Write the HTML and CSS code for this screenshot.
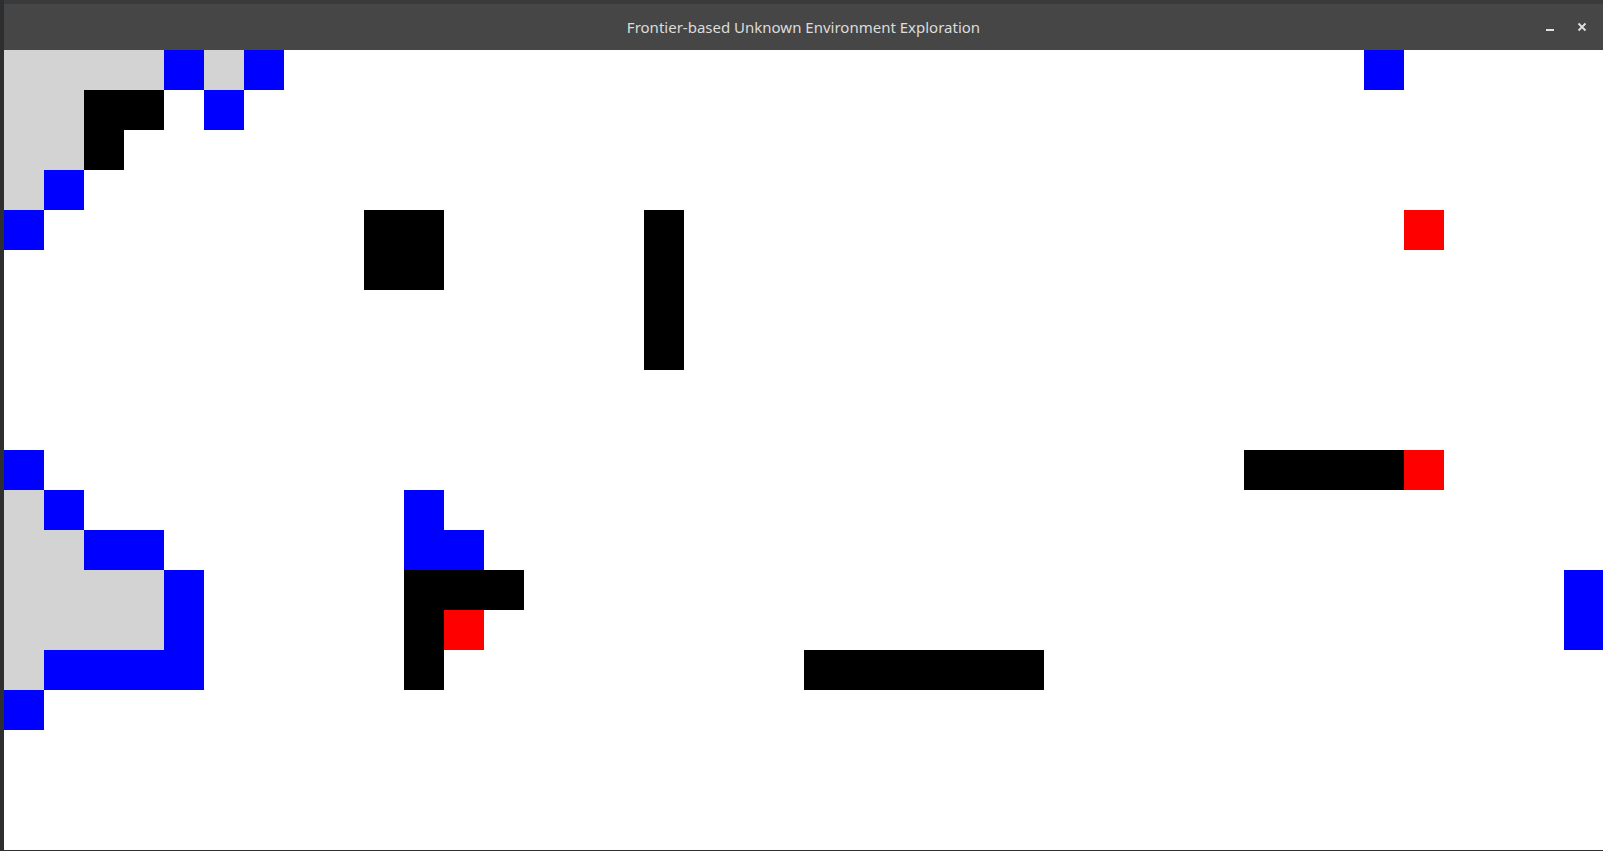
FILE: index.html
```html
<!DOCTYPE html>
<html>
<head>
<meta charset="utf-8">
<title>Frontier-based Unknown Environment Exploration</title>
<link rel="stylesheet" href="styles.css">
</head>
<body>
<div class="desktop">
  <div class="side-strip"></div>
  <div class="window">
    <div class="titlebar">
      <div class="title">Frontier-based Unknown Environment Exploration</div>
      <div class="controls">
        <span class="btn min"><svg width="10" height="10" viewBox="0 0 10 10"><rect x="1" y="7" width="8" height="2" fill="#e0e0e0"/></svg></span>
        <span class="btn close"><svg width="10" height="10" viewBox="0 0 10 10"><path d="M1.5 1.5 L8.5 8.5 M8.5 1.5 L1.5 8.5" stroke="#e0e0e0" stroke-width="1.8"/></svg></span>
      </div>
    </div>
    <div class="canvas-wrap">
      <div class="map">
        <!-- row 0 -->
        <div class="c known" style="grid-area:1/1/2/5"></div>
        <div class="c frontier" style="grid-area:1/5/2/6"></div>
        <div class="c known" style="grid-area:1/6/2/7"></div>
        <div class="c frontier" style="grid-area:1/7/2/8"></div>
        <div class="c frontier" style="grid-area:1/35/2/36"></div>
        <!-- row 1 -->
        <div class="c known" style="grid-area:2/1/3/3"></div>
        <div class="c wall" style="grid-area:2/3/3/5"></div>
        <div class="c frontier" style="grid-area:2/6/3/7"></div>
        <!-- row 2 -->
        <div class="c known" style="grid-area:3/1/4/3"></div>
        <div class="c wall" style="grid-area:3/3/4/4"></div>
        <!-- row 3 -->
        <div class="c known" style="grid-area:4/1/5/2"></div>
        <div class="c frontier" style="grid-area:4/2/5/3"></div>
        <!-- row 4 -->
        <div class="c frontier" style="grid-area:5/1/6/2"></div>
        <div class="c wall" style="grid-area:5/10/7/12"></div>
        <div class="c wall" style="grid-area:5/17/9/18"></div>
        <div class="c robot" style="grid-area:5/36/6/37"></div>
        <!-- row 10 -->
        <div class="c frontier" style="grid-area:11/1/12/2"></div>
        <div class="c wall" style="grid-area:11/32/12/36"></div>
        <div class="c robot" style="grid-area:11/36/12/37"></div>
        <!-- row 11 -->
        <div class="c known" style="grid-area:12/1/13/2"></div>
        <div class="c frontier" style="grid-area:12/2/13/3"></div>
        <div class="c frontier" style="grid-area:12/11/13/12"></div>
        <!-- row 12 -->
        <div class="c known" style="grid-area:13/1/14/3"></div>
        <div class="c frontier" style="grid-area:13/3/14/5"></div>
        <div class="c frontier" style="grid-area:13/11/14/13"></div>
        <!-- row 13-14 -->
        <div class="c known" style="grid-area:14/1/16/5"></div>
        <div class="c frontier" style="grid-area:14/5/16/6"></div>
        <div class="c wall" style="grid-area:14/11/15/14"></div>
        <div class="c frontier" style="grid-area:14/40/16/41"></div>
        <div class="c wall" style="grid-area:15/11/17/12"></div>
        <div class="c robot" style="grid-area:15/12/16/13"></div>
        <!-- row 15 -->
        <div class="c known" style="grid-area:16/1/17/2"></div>
        <div class="c frontier" style="grid-area:16/2/17/6"></div>
        <div class="c wall" style="grid-area:16/21/17/27"></div>
        <!-- row 16 -->
        <div class="c frontier" style="grid-area:17/1/18/2"></div>
      </div>
    </div>
    <div class="bottom-edge"></div>
  </div>
</div>
</body>
</html>
```

FILE: styles.css
```css
html, body {
  margin: 0;
  padding: 0;
  width: 1603px;
  height: 851px;
  overflow: hidden;
  background: #393a3b;
}

.desktop {
  display: flex;
  width: 1603px;
  height: 851px;
  padding-top: 4px;
  box-sizing: border-box;
}

.side-strip {
  width: 4px;
  flex: 0 0 4px;
  background: #2c2e2f;
  margin-top: -4px;
}

.window {
  display: flex;
  flex-direction: column;
  width: 1599px;
  flex: 0 0 1599px;
  overflow: hidden;
}

.titlebar {
  height: 46px;
  flex: 0 0 46px;
  background: #464646;
  display: flex;
  align-items: center;
  justify-content: center;
  position: relative;
}

.title {
  font-family: "Noto Sans", "Open Sans", sans-serif;
  font-size: 15px;
  color: #dcdcdc;
}

.controls {
  position: absolute;
  right: 16px;
  top: 0;
  height: 46px;
  display: flex;
  align-items: center;
  gap: 22px;
}

.btn {
  display: flex;
  width: 10px;
  height: 10px;
}

.canvas-wrap {
  height: 800px;
  flex: 0 0 800px;
  background: #ffffff;
  overflow: hidden;
}

.map {
  display: grid;
  grid-template-columns: repeat(40, 40px);
  grid-template-rows: repeat(20, 40px);
  width: 1600px;
  height: 800px;
}

.known { background: #d3d3d3; }
.frontier { background: #0000ff; }
.wall { background: #000000; }
.robot { background: #ff0000; }

.bottom-edge {
  height: 1px;
  flex: 0 0 1px;
  background: #2c2e2f;
}
```
